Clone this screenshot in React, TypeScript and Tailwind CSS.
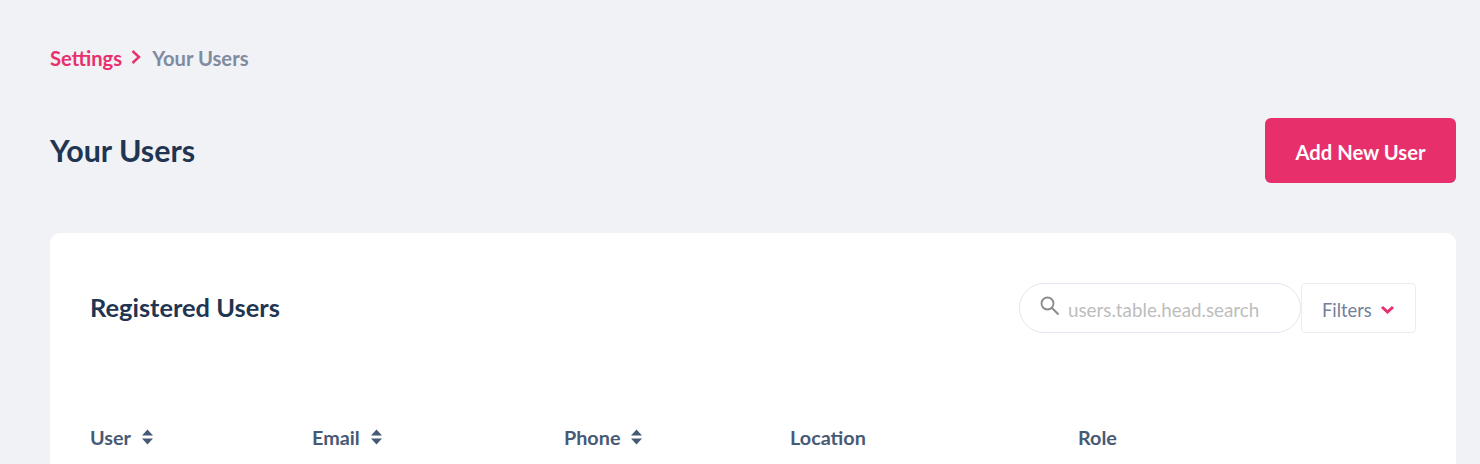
import React from "react";

const font = "font-['Lato','Noto_Sans',sans-serif]";

function SortIcon() {
  return (
    <svg width="11" height="16" viewBox="0 0 11 16" className="ml-[11px]">
      <path d="M5.5 0.5 L11 6.5 H0 Z" fill="#475a75" />
      <path d="M0 9.5 H11 L5.5 15.5 Z" fill="#475a75" />
    </svg>
  );
}

function HeadCell({ label, sort, width }: { label: string; sort?: boolean; width: string }) {
  return (
    <div className={`flex items-center ${width}`}>
      <span className="text-[19.8px] font-bold text-[#475a75] leading-6">{label}</span>
      {sort && <SortIcon />}
    </div>
  );
}

export default function App() {
  return (
    <div className={`${font} h-[464px] overflow-hidden bg-[#f0f2f6] pl-[50px] pr-6 pt-[46px]`}>
      {/* Breadcrumb */}
      <div className="flex items-center h-6 text-[20.2px] font-bold leading-6">
        <span className="text-[#e92f6c]">Settings</span>
        <svg width="12" height="16" viewBox="0 0 12 16" className="ml-[8px] mr-[10px] mt-[-3px]">
          <path d="M2.5 2 L9 8 L2.5 14" fill="none" stroke="#e92f6c" strokeWidth="2.4" />
        </svg>
        <span className="text-[#7f8ba0]">Your Users</span>
      </div>

      {/* Title row */}
      <div className="flex items-center justify-between mt-12">
        <h1 className="text-[30.4px] font-bold text-[#1f3552] leading-9 mt-[-2px]">Your Users</h1>
        <button className="w-[191px] h-[65px] rounded-[6px] bg-[#e72f6b] text-white text-[20.2px] font-bold pt-[3px]">
          Add New User
        </button>
      </div>

      {/* Card */}
      <div className="mt-[50px] bg-white rounded-[10px] px-10 pt-[50px] h-[400px]">
        <div className="flex items-center justify-between">
          <h2 className="text-[25.4px] font-bold text-[#1f3552] leading-8 mt-[-2px]">Registered Users</h2>
          <div className="flex items-center">
            <div className="flex items-center w-[282px] h-[50px] rounded-[25px] border border-[#e3e8f0] pl-5">
              <svg width="20" height="20" viewBox="0 0 20 20" className="mt-[-5px]">
                <circle cx="7.5" cy="7.5" r="6" fill="none" stroke="#8a8a8a" strokeWidth="1.8" />
                <path d="M12 12 L18.5 18.5" stroke="#8a8a8a" strokeWidth="2" />
              </svg>
              <span className="ml-[8px] pt-[5px] text-[18.8px] text-[#bdbdbd]">users.table.head.search</span>
            </div>
            <div className="flex items-center w-[115px] h-[50px] rounded-[4px] border border-[#e9edf3] pl-[20px]">
              <span className="pt-[5px] text-[18.3px] text-[#74809a]">Filters</span>
              <svg width="15" height="10" viewBox="0 0 15 10" className="ml-[8px] mt-[4px]">
                <path d="M2 2 L7.5 7 L13 2" fill="none" stroke="#e92f6c" strokeWidth="3" />
              </svg>
            </div>
          </div>
        </div>

        {/* Table head */}
        <div className="flex items-center mt-[92px]">
          <HeadCell label="User" sort width="w-[222px]" />
          <HeadCell label="Email" sort width="w-[252px]" />
          <HeadCell label="Phone" sort width="w-[226px]" />
          <HeadCell label="Location" width="w-[288px]" />
          <HeadCell label="Role" width="w-[100px]" />
        </div>
      </div>
    </div>
  );
}
